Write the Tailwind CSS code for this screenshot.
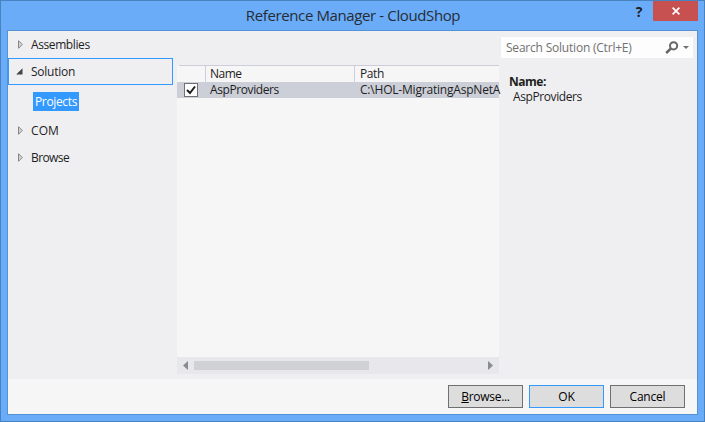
<!DOCTYPE html>
<html lang="en">
<head>
<meta charset="utf-8">
<title>Reference Manager - CloudShop</title>
<script src="https://cdn.jsdelivr.net/npm/@tailwindcss/browser@4"></script>
</head>
<body class="w-[705px] h-[422px] overflow-hidden font-['Open_Sans','Noto_Sans',sans-serif] text-[12px] leading-4 text-[#1e1e1e] whitespace-nowrap">
<div class="w-[705px] h-[422px] bg-[#6aacf8] border border-[#4683c0] pl-1.5 pr-[6px] flex flex-col">
  <header class="relative h-[29px] shrink-0 flex justify-center">
    <h1 class="text-[15px] leading-[29px] tracking-[-0.38px] text-[#262c35] ml-[1px]">Reference Manager - CloudShop</h1>
    <div class="absolute right-0 top-0 flex">
      <span class="w-[20px] mr-[4px] text-center text-[14px] font-bold leading-[21px]">?</span>
      <button class="w-[45px] h-[20px] bg-[#c75050] flex items-center justify-center" aria-label="Close">
        <svg width="8" height="8" viewBox="0 0 8 8"><path d="M.6 .6L7.4 7.4M7.4 .6L.6 7.4" stroke="#fff" stroke-width="1.7"/></svg>
      </button>
    </div>
  </header>
  <main class="w-[691px] h-[385px] border border-[#5492d6] bg-[#efeff2] flex flex-col">
    <div class="h-[348px] flex shrink-0">
      <nav class="w-[165px] shrink-0">
        <div class="h-[27px] flex items-center pl-[10px]">
          <svg class="mr-[8px]" width="5" height="9" viewBox="0 0 5 9"><path d="M.5 .7V8.3L4.3 4.5Z" fill="#d4d4d6" stroke="#858585"/></svg>
          <span class="tracking-[-0.4px]">Assemblies</span>
        </div>
        <div class="h-[27px] border border-[#3399ff] flex items-center pl-[7px]">
          <svg class="mr-[8px]" width="7" height="7" viewBox="0 0 7 7"><path d="M6.5 .2V6.5H.2Z" fill="#444"/></svg>
          <span class="tracking-[-0.25px]">Solution</span>
        </div>
        <div class="mt-[7px] ml-[25px] w-[46px] h-[19px] bg-[#3399ff] text-white flex items-center pl-[2px]"><span class="tracking-[-0.35px]">Projects</span></div>
        <div class="mt-[6px] h-[27px] flex items-center pl-[10px]">
          <svg class="mr-[8px]" width="5" height="9" viewBox="0 0 5 9"><path d="M.5 .7V8.3L4.3 4.5Z" fill="#d4d4d6" stroke="#858585"/></svg>
          <span class="tracking-[0.1px]">COM</span>
        </div>
        <div class="h-[27px] flex items-center pl-[10px]">
          <svg class="mr-[8px]" width="5" height="9" viewBox="0 0 5 9"><path d="M.5 .7V8.3L4.3 4.5Z" fill="#d4d4d6" stroke="#858585"/></svg>
          <span class="tracking-[-0.6px]">Browse</span>
        </div>
      </nav>
      <section class="ml-[4px] mt-[34px] w-[322px] h-[309px] bg-[#f6f6f6] flex flex-col">
        <div class="h-[17px] shrink-0 ml-[2px] border-t border-[#cccedb] flex leading-[16px]">
          <div class="w-[27px] border-r border-[#cccedb]"></div>
          <div class="w-[149px] border-r border-[#cccedb] pl-[4px]"><span class="tracking-[-0.5px]">Name</span></div>
          <div class="pl-[5px]"><span class="tracking-[-0.4px]">Path</span></div>
        </div>
        <div class="h-[16px] shrink-0 bg-[#cccfd8] flex items-center">
          <div class="ml-[7px] w-[14px] h-[14px] shrink-0 bg-[#fdfdfd] border border-[#717171] flex items-center justify-center">
            <svg width="10" height="10" viewBox="0 0 10 10"><path d="M1 5L4 8L9 1.5" fill="none" stroke="#1e1e1e" stroke-width="2"/></svg>
          </div>
          <span class="ml-[12px] w-[150px] shrink-0 tracking-[-0.4px]">AspProviders</span>
          <span class="tracking-[-0.2px]">C:\HOL-MigratingAspNetA</span>
        </div>
        <div class="flex-1"></div>
        <div class="h-[17px] shrink-0 bg-[#e8e8ec] flex items-center pl-[6px] pr-[6px]">
          <svg width="5" height="9" viewBox="0 0 5 9"><path d="M5 0V9L0 4.5Z" fill="#868b94"/></svg>
          <div class="ml-[6px] w-[175px] h-[9px] bg-[#d0d1d3]"></div>
          <svg class="ml-auto" width="5" height="9" viewBox="0 0 5 9"><path d="M0 0V9L5 4.5Z" fill="#868b94"/></svg>
        </div>
      </section>
      <aside class="ml-[2px] mt-[6px] w-[192px]">
        <div class="h-[21px] bg-[#fdfdfd] flex items-center pl-[5px] pr-[4px] text-[#717171]">
          <span class="tracking-[-0.21px]">Search Solution (Ctrl+E)</span>
          <svg class="ml-auto" width="14" height="13" viewBox="0 0 14 13"><circle cx="8.6" cy="4.8" r="3.6" fill="none" stroke="#666" stroke-width="2"/><path d="M6 7.4L1.2 12" stroke="#666" stroke-width="2.6"/></svg>
          <svg class="ml-[4px]" width="6" height="3" viewBox="0 0 6 3"><path d="M0 0H6L3 3Z" fill="#717171"/></svg>
        </div>
        <div class="mt-[16px] pl-[8px] leading-[15px] font-bold tracking-[-0.5px]">Name:</div>
        <div class="pl-[12px] leading-[16px]"><span class="tracking-[-0.4px]">AspProviders</span></div>
      </aside>
    </div>
    <footer class="flex-1 bg-[#f6f6f6] flex justify-end gap-[6px] pt-[6px] pr-[12px] text-black">
      <button class="w-[75px] h-[23px] bg-[#dddddd] border border-[#707070]"><span class="tracking-[-0.3px]"><u>B</u>rowse...</span></button>
      <button class="w-[75px] h-[23px] bg-[#dddddd] border border-[#3399ff]">OK</button>
      <button class="w-[75px] h-[23px] bg-[#dddddd] border border-[#707070]"><span class="tracking-[-0.2px]">Cancel</span></button>
    </footer>
  </main>
</div>
</body>
</html>
